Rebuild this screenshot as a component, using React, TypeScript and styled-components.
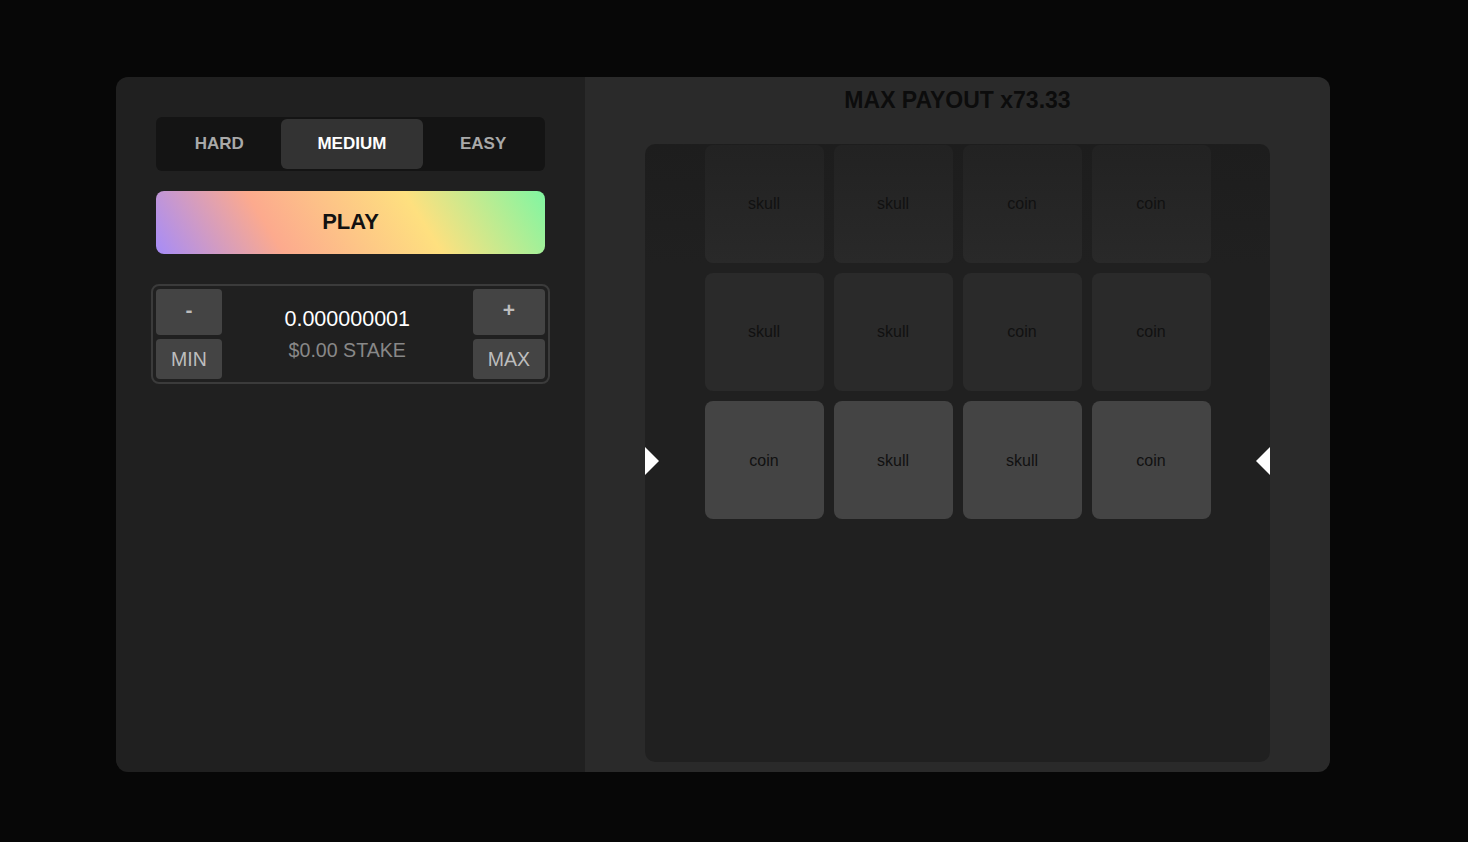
import React from "react";
import styled, { createGlobalStyle } from "styled-components";

const GlobalStyle = createGlobalStyle`
  html, body { margin: 0; padding: 0; background: #070707; }
  body { font-family: "Liberation Sans", Arial, Helvetica, sans-serif; }
  * { box-sizing: border-box; }
`;

const Page = styled.div`
  width: 1468px;
  height: 842px;
  padding: 77px 138px 70px 116px;
  display: flex;
`;

const Card = styled.div`
  flex: 1;
  display: grid;
  grid-template-columns: 469px 1fr;
  border-radius: 12px;
  overflow: hidden;
`;

const LeftPanel = styled.div`
  background: #202020;
  padding: 40px;
  display: flex;
  flex-direction: column;
`;

const Tabs = styled.div`
  display: flex;
  background: #141414;
  border-radius: 6px;
  padding: 2px;
  height: 54px;
`;

const Tab = styled.button<{ $active?: boolean }>`
  flex: 1 1 auto;
  border: none;
  border-radius: 6px;
  background: ${(p) => (p.$active ? "#333333" : "transparent")};
  color: ${(p) => (p.$active ? "#ffffff" : "#a9a9a9")};
  font-family: inherit;
  font-weight: 700;
  font-size: 17px;
  padding: 0;
  cursor: pointer;
`;

const PlayButton = styled.button`
  margin-top: 20px;
  height: 63px;
  border: none;
  border-radius: 8px;
  background: linear-gradient(58deg, #a68cf8 0%, #fcaa8e 30%, #fee07f 67%, #80f6a2 100%);
  color: #111111;
  font-family: inherit;
  font-weight: 700;
  font-size: 22px;
  padding: 0 0 2px;
  cursor: pointer;
`;

const StakeBox = styled.div`
  margin: 30px -5px 0;
  border: 2px solid #3b3b3b;
  border-radius: 8px;
  padding: 3px;
  display: grid;
  grid-template-columns: auto 1fr auto;
  grid-template-rows: 46px 40px;
  row-gap: 4px;
`;

const StakeBtn = styled.button<{ $bold?: boolean; $col: number; $row: number }>`
  grid-column: ${(p) => p.$col};
  grid-row: ${(p) => p.$row};
  border: none;
  border-radius: 4px;
  background: #444444;
  color: #bdbdbd;
  font-family: inherit;
  font-size: ${(p) => (p.$bold ? "21px" : "19.5px")};
  font-weight: ${(p) => (p.$bold ? 700 : 400)};
  padding: ${(p) => (p.$bold ? "0 15px 4px" : "0 15px")};
  cursor: pointer;
`;

const StakeCenter = styled.div`
  grid-column: 2;
  grid-row: 1 / 3;
  display: flex;
  flex-direction: column;
  align-items: center;
  justify-content: center;
  gap: 6px;
`;

const Amount = styled.div`
  color: #ffffff;
  font-size: 21.5px;
  line-height: 26px;
`;

const StakeLabel = styled.div`
  color: #888888;
  font-size: 19.6px;
  line-height: 24px;
`;

const RightPanel = styled.div`
  background: #2a2a2a;
  padding: 10px 60px 10px;
  display: flex;
  flex-direction: column;
`;

const Title = styled.div`
  text-align: center;
  color: #0c0c0c;
  font-weight: 700;
  font-size: 23px;
  line-height: 26px;
  margin-bottom: 31px;
`;

const Board = styled.div`
  flex: 1;
  position: relative;
  background: linear-gradient(to bottom, #1d1d1d 0px, #202020 120px);
  border-radius: 10px;
  overflow: hidden;
  padding-top: 1px;
  display: flex;
  justify-content: center;
  align-items: flex-start;
`;

const Grid = styled.div`
  display: grid;
  grid-template-columns: repeat(4, 119px);
  grid-auto-rows: 118px;
  gap: 10px;
`;

const Tile = styled.div<{ $state: "top" | "mid" | "active" }>`
  border-radius: 8px;
  background: ${(p) =>
    p.$state === "active"
      ? "#444444"
      : p.$state === "top"
      ? "linear-gradient(to bottom, #222222, #292929)"
      : "#2a2a2a"};
  color: #111111;
  font-size: 16px;
  padding-top: ${(p) => (p.$state === "active" ? "2px" : "0")};
  display: flex;
  align-items: center;
  justify-content: center;
`;

const Pointer = styled.div<{ $side: "left" | "right" }>`
  position: absolute;
  top: 303px;
  ${(p) => (p.$side === "left" ? "left: 0;" : "right: 0;")}
  width: 0;
  height: 0;
  border-top: 14px solid transparent;
  border-bottom: 14px solid transparent;
  ${(p) =>
    p.$side === "left"
      ? "border-left: 14px solid #ffffff;"
      : "border-right: 14px solid #ffffff;"}
`;

const rows = [
  ["skull", "skull", "coin", "coin"],
  ["skull", "skull", "coin", "coin"],
  ["coin", "skull", "skull", "coin"],
];

const states: Array<"top" | "mid" | "active"> = ["top", "mid", "active"];

export default function App() {
  return (
    <>
      <GlobalStyle />
      <Page>
        <Card>
          <LeftPanel>
            <Tabs>
              <Tab>HARD</Tab>
              <Tab $active>MEDIUM</Tab>
              <Tab>EASY</Tab>
            </Tabs>
            <PlayButton>PLAY</PlayButton>
            <StakeBox>
              <StakeBtn $bold $col={1} $row={1}>-</StakeBtn>
              <StakeBtn $col={1} $row={2}>MIN</StakeBtn>
              <StakeCenter>
                <Amount>0.000000001</Amount>
                <StakeLabel>$0.00 STAKE</StakeLabel>
              </StakeCenter>
              <StakeBtn $bold $col={3} $row={1}>+</StakeBtn>
              <StakeBtn $col={3} $row={2}>MAX</StakeBtn>
            </StakeBox>
          </LeftPanel>
          <RightPanel>
            <Title>MAX PAYOUT x73.33</Title>
            <Board>
              <Grid>
                {rows.map((row, r) =>
                  row.map((item, c) => (
                    <Tile key={`${r}-${c}`} $state={states[r]}>
                      {item}
                    </Tile>
                  ))
                )}
              </Grid>
              <Pointer $side="left" />
              <Pointer $side="right" />
            </Board>
          </RightPanel>
        </Card>
      </Page>
    </>
  );
}
